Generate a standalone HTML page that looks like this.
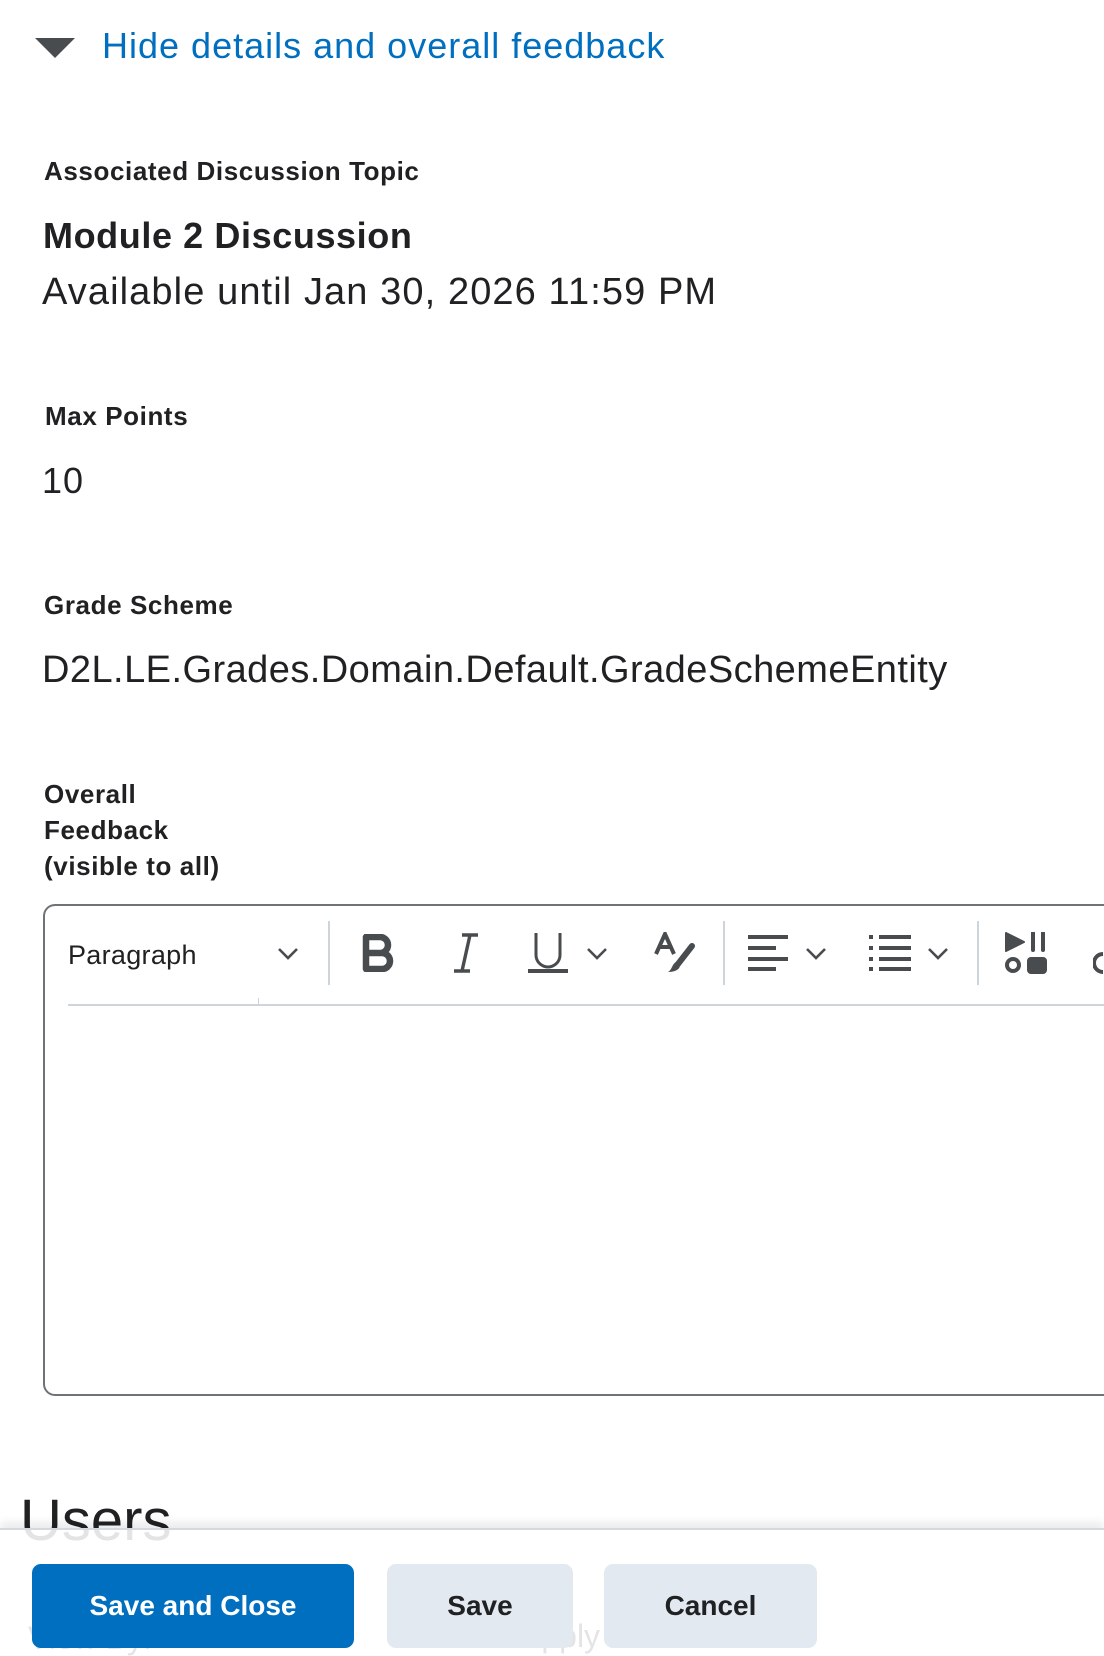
<!DOCTYPE html>
<html><head><meta charset="utf-8"><style>
*{margin:0;padding:0;box-sizing:border-box}
body{width:1104px;height:1656px;overflow:hidden;background:#fff;font-family:"Liberation Sans",sans-serif;color:#202122;position:relative}
.a{position:absolute;white-space:nowrap;line-height:1}
.lbl{font-weight:bold;font-size:26px;letter-spacing:0.6px}
.big{font-size:36px}
.sep{position:absolute;width:2px;background:#cdd5dc;top:921px;height:64px}
.ic{position:absolute}
.btn{position:absolute;top:1564px;height:84px;border-radius:9px;font-weight:bold;font-size:28px;display:flex;align-items:center;justify-content:center;letter-spacing:0px}
</style></head><body>
<svg class="ic" style="left:35px;top:38px" width="40" height="21"><polygon points="0,0 40,0 20,20" fill="#494c4e"/></svg>
<div class="a" style="left:102px;top:28px;font-size:36px;color:#006fbf;letter-spacing:1px">Hide details and overall feedback</div>

<div class="a lbl" style="left:44px;top:158px">Associated Discussion Topic</div>
<div class="a big" style="left:43px;top:218px;font-weight:bold;letter-spacing:0.6px">Module 2 Discussion</div>
<div class="a" style="left:42px;top:273px;font-size:38px;letter-spacing:1.1px">Available until Jan 30, 2026 11:59 PM</div>

<div class="a lbl" style="left:45px;top:403px">Max Points</div>
<div class="a big" style="left:42px;top:463px;letter-spacing:1px">10</div>

<div class="a lbl" style="left:44px;top:592px">Grade Scheme</div>
<div class="a" style="left:42px;top:651px;font-size:38px;letter-spacing:0.45px">D2L.LE.Grades.Domain.Default.GradeSchemeEntity</div>

<div class="a lbl" style="left:44px;top:781px">Overall</div>
<div class="a lbl" style="left:44px;top:817px">Feedback</div>
<div class="a lbl" style="left:44px;top:853px">(visible to all)</div>

<div style="position:absolute;left:43px;top:904px;width:1100px;height:492px;border:2px solid #6e7376;border-right:none;border-radius:12px 0 0 12px"></div>
<div class="a" style="left:68px;top:942px;font-size:27px;letter-spacing:0.3px">Paragraph</div>
<svg class="ic" style="left:277px;top:947px" width="22" height="14"><polyline points="2,2 11,11 20,2" fill="none" stroke="#494c4e" stroke-width="2.6"/></svg>
<div style="position:absolute;left:68px;top:1004px;width:1040px;height:2px;background:#cdd5dc"></div>
<div style="position:absolute;left:258px;top:998px;width:1px;height:7px;background:#cdd5dc"></div>
<div class="sep" style="left:328px"></div>
<div class="sep" style="left:723px"></div>
<div class="sep" style="left:977px"></div>
<svg class="ic" style="left:362px;top:934px" width="34" height="38"><path d="M4 3h14a8 8 0 0 1 0 16H4zM4 19h16a8 8 0 0 1 0 16H4z" fill="none" stroke="#494c4e" stroke-width="6.5" stroke-linejoin="round"/></svg>
<svg class="ic" style="left:452px;top:933px" width="28" height="40"><path d="M10 2h16M2 38h16M18 2L10 38" fill="none" stroke="#494c4e" stroke-width="3.4"/></svg>
<svg class="ic" style="left:528px;top:932px" width="42" height="42"><path d="M8 1v22a12 12 0 0 0 24 0V1" fill="none" stroke="#494c4e" stroke-width="3"/><rect x="0" y="37" width="40" height="4" fill="#494c4e"/></svg>
<svg class="ic" style="left:586px;top:947px" width="22" height="14"><polyline points="2,2 11,11 20,2" fill="none" stroke="#494c4e" stroke-width="2.6"/></svg>
<svg class="ic" style="left:654px;top:932px" width="42" height="42"><path d="M2 22L11 2L20 22M5 15h12" fill="none" stroke="#494c4e" stroke-width="4"/><path d="M38 14L24 32" stroke="#494c4e" stroke-width="6" stroke-linecap="round"/><path d="M22 30c-4 2-4 8-8 10 6 0 12-2 12-7z" fill="#494c4e"/></svg>
<svg class="ic" style="left:748px;top:934px" width="42" height="38"><path d="M0 3h40M0 14h28M0 25h40M0 35h28" stroke="#494c4e" stroke-width="4"/></svg>
<svg class="ic" style="left:805px;top:947px" width="22" height="14"><polyline points="2,2 11,11 20,2" fill="none" stroke="#494c4e" stroke-width="2.6"/></svg>
<svg class="ic" style="left:869px;top:934px" width="44" height="38"><path d="M0 3h4M0 14h4M0 25h4M0 35h4M10 3h32M10 14h32M10 25h32M10 35h32" stroke="#494c4e" stroke-width="4"/></svg>
<svg class="ic" style="left:927px;top:947px" width="22" height="14"><polyline points="2,2 11,11 20,2" fill="none" stroke="#494c4e" stroke-width="2.6"/></svg>
<svg class="ic" style="left:1005px;top:932px" width="44" height="44"><polygon points="1,1 19,10 1,19" fill="#494c4e" stroke="#494c4e" stroke-width="2" stroke-linejoin="round"/><path d="M28 1v17M38 1v17" stroke="#494c4e" stroke-width="4" stroke-linecap="round"/><circle cx="8" cy="33" r="6" fill="none" stroke="#494c4e" stroke-width="4"/><rect x="22" y="25" width="20" height="17" rx="4" fill="#494c4e"/></svg>
<svg class="ic" style="left:1093px;top:950px" width="11" height="26"><path d="M10 4a9 9 0 0 0 0 18" fill="none" stroke="#494c4e" stroke-width="4"/></svg>

<div class="a" style="left:20px;top:1492px;font-size:58px;letter-spacing:0px">Users</div>
<div class="a" style="left:28px;top:1622px;font-size:32px;color:#202122">View By:</div>
<div class="a" style="left:520px;top:1620px;font-size:32px;color:#202122">Apply</div>
<div style="position:absolute;left:0;top:1528px;width:1104px;height:128px;background:rgba(255,255,255,0.88);border-top:2px solid #d3d9e0;box-shadow:0 -6px 8px rgba(0,0,0,0.08)"></div>
<div class="btn" style="left:32px;width:322px;background:#006fbf;color:#fff">Save and Close</div>
<div class="btn" style="left:387px;width:186px;background:#e3e9f1">Save</div>
<div class="btn" style="left:604px;width:213px;background:#e3e9f1">Cancel</div>
</body></html>
